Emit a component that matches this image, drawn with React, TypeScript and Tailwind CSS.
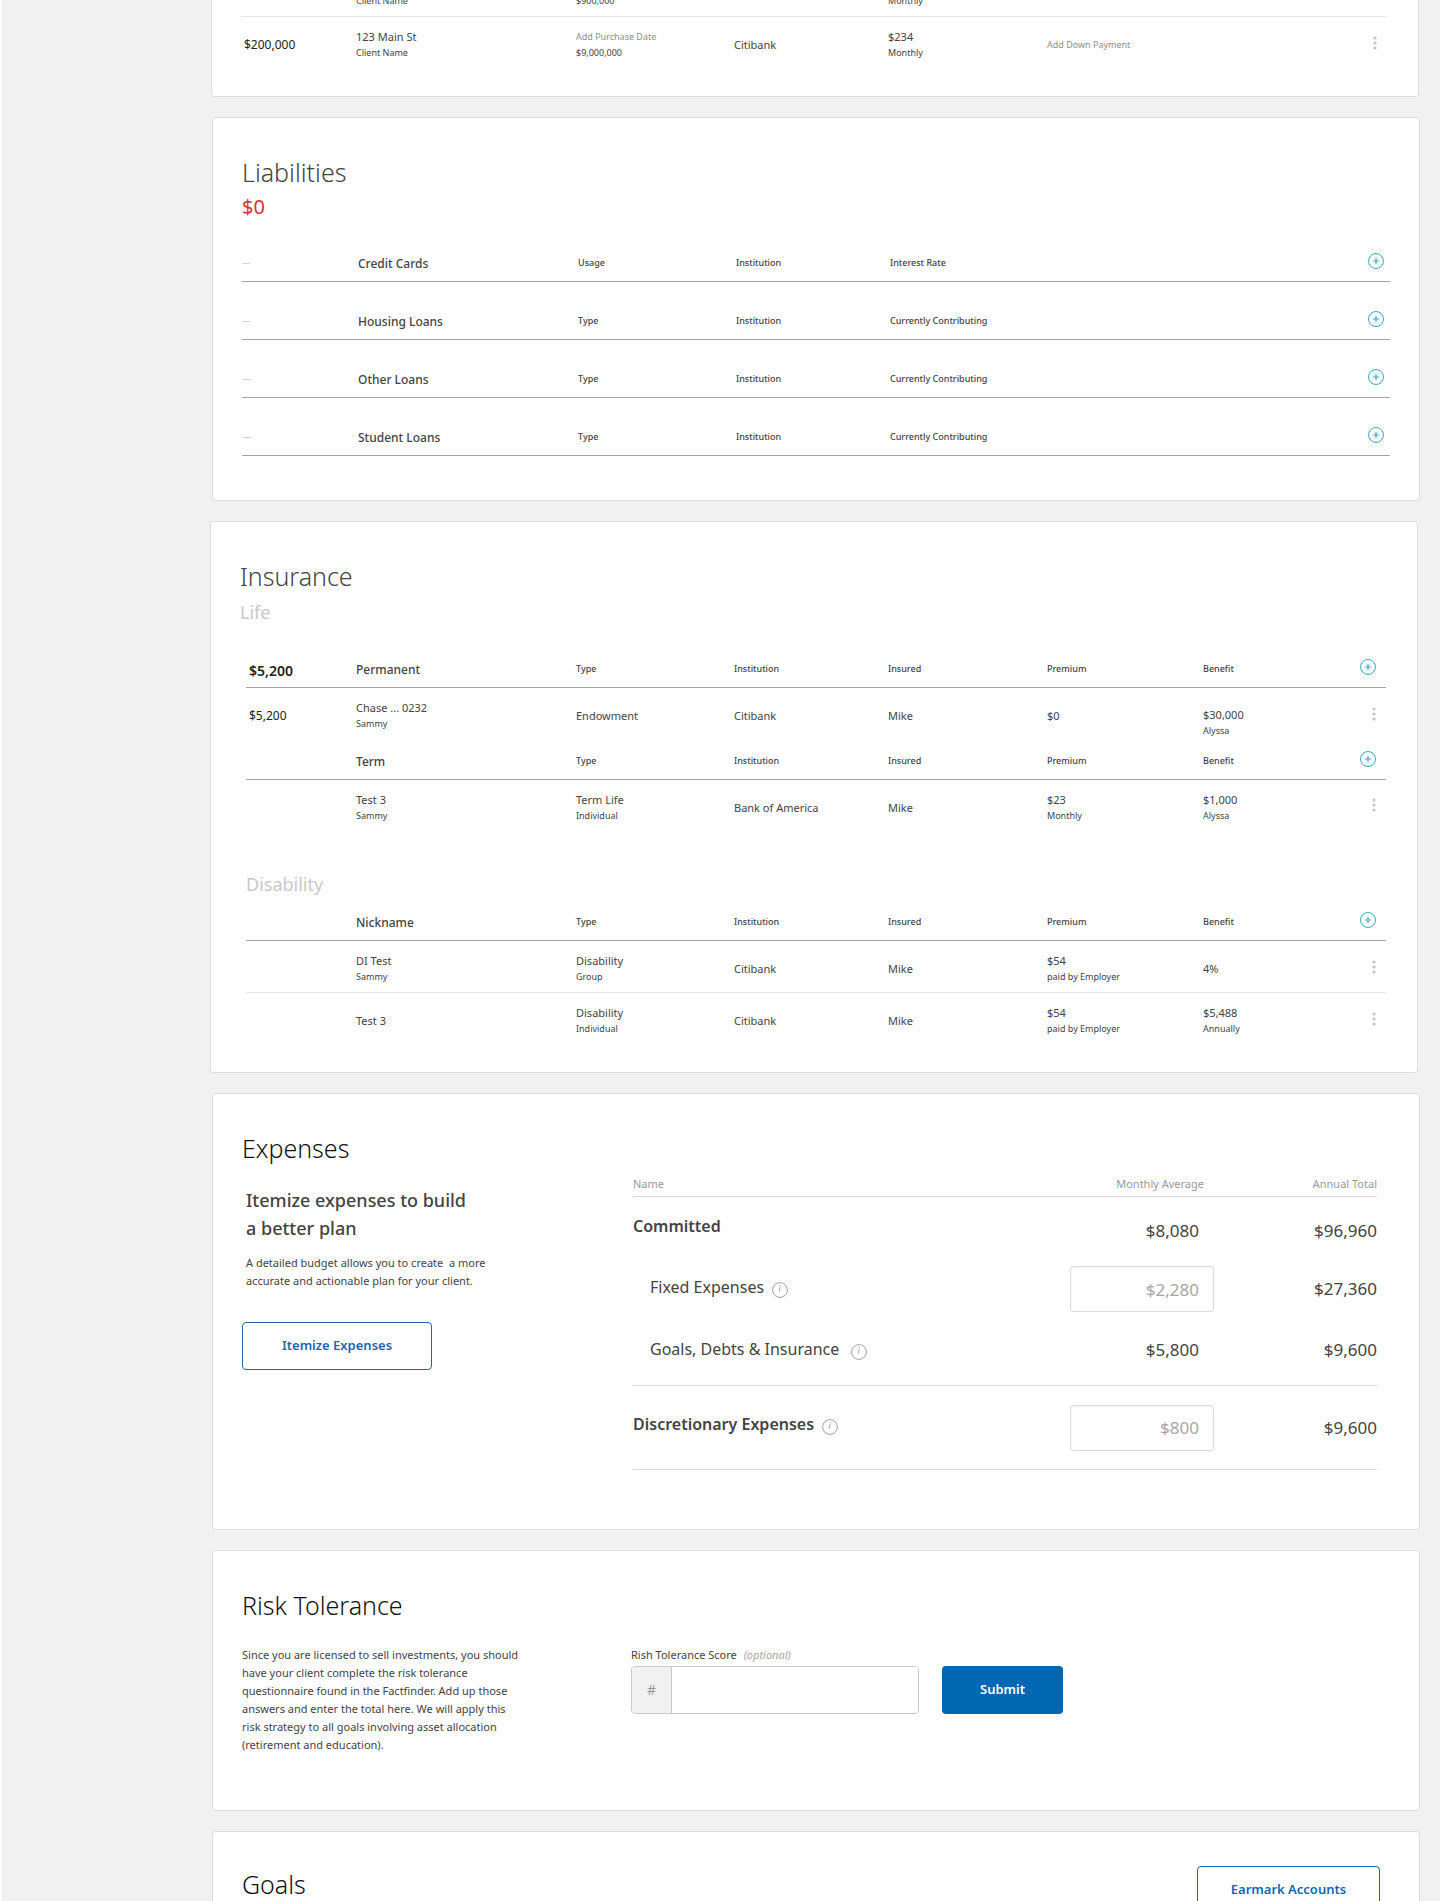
import React, { FC, ReactNode } from "react";

interface CardProps {
  children: ReactNode;
  className?: string;
}

const Card: FC<CardProps> = ({ children, className = "" }) => (
  <section
    className={`rounded-[3px] border border-[#dedede] bg-[#fefefe] px-[29px] ${className}`}
  >
    {children}
  </section>
);

const Title: FC<{ children: ReactNode; dark?: boolean }> = ({ children, dark }) => (
  <h2
    className={`text-[25px] leading-9 font-light ${dark ? "text-[#111]" : "text-[#444]"}`}
  >
    {children}
  </h2>
);

const PlusButton: FC<{ label: string }> = ({ label }) => (
  <button type="button" aria-label={label} className="block h-4 w-4 cursor-pointer">
    <svg viewBox="0 0 16 16" fill="none" stroke="#3ba7d3" className="h-4 w-4">
      <circle cx="8" cy="8" r="7.5" strokeWidth="1" />
      <path d="M8 5v6M5 8h6" strokeWidth="1.2" />
    </svg>
  </button>
);

const DotsButton: FC<{ label: string }> = ({ label }) => (
  <button type="button" aria-label={label} className="block h-4 w-4 cursor-pointer">
    <svg viewBox="0 0 16 16" fill="#c4c4c4" className="h-4 w-4">
      <circle cx="8" cy="3" r="1.6" />
      <circle cx="8" cy="8" r="1.6" />
      <circle cx="8" cy="13" r="1.6" />
    </svg>
  </button>
);

const InfoButton: FC<{ label: string }> = ({ label }) => (
  <button type="button" aria-label={label} className="mt-[6px] block h-4 w-4 cursor-pointer">
    <svg viewBox="0 0 16 16" fill="none" stroke="#8c8c8c" className="h-4 w-4">
      <circle cx="8" cy="8" r="7.4" strokeWidth="0.8" />
      <path d="M8.1 5.2L7.2 9.6M8.6 3.2L8.4 4.2" strokeWidth="0.8" />
    </svg>
  </button>
);

interface Cell {
  top?: string;
  sub?: string;
  muted?: boolean;
  low?: boolean;
}

interface Row {
  amount?: string;
  cells: (Cell | null)[];
}

const Columns: FC<{ first: string }> = ({ first }) => (
  <colgroup>
    <col className={first} />
    <col className="w-[220px]" />
    <col className="w-[158px]" />
    <col className="w-[154px]" />
    <col className="w-[159px]" />
    <col className="w-[156px]" />
    <col />
  </colgroup>
);

interface HeadProps {
  amount?: ReactNode;
  name: string;
  columns: (string | null)[];
  tall?: boolean;
  inset?: boolean;
}

const HeadRow: FC<HeadProps> = ({ amount, name, columns, tall, inset }) => (
  <tr className={`border-b border-[#a3a3a3] align-bottom ${tall ? "h-[58px]" : "h-10"}`}>
    <td
      className={`text-sm leading-4 font-semibold text-[#222] ${
        inset ? "pb-2 pl-[3px]" : "pb-[10px]"
      }`}
    >
      {amount}
    </td>
    <th scope="col" className="pb-[9px] text-left text-xs leading-4 font-medium">
      {name}
    </th>
    {columns.map((column, i) =>
      column ? (
        <th
          key={i}
          scope="col"
          className="pb-[10px] text-left text-[9px] leading-4 font-medium"
        >
          {column}
        </th>
      ) : (
        <td key={i} />
      )
    )}
    <td className={`pb-3 ${inset ? "pr-[10px]" : "pr-[6px]"}`}>
      <div className="flex justify-end">
        <PlusButton label={`Add to ${name}`} />
      </div>
    </td>
  </tr>
);

const DataRow: FC<Row & { last?: boolean }> = ({ amount, cells, last }) => (
  <tr className={`h-[51px] ${last ? "" : "border-b border-[#e6e6e6]"}`}>
    <td className="pt-3 pb-[7px] pl-[3px] text-xs leading-4 text-[#222]">{amount}</td>
    {cells.map((cell, i) => (
      <td key={i} className={cell?.low ? "pt-[19px]" : "pt-3 pb-[7px]"}>
        {cell && (
          <>
            <div
              className={
                cell.muted
                  ? "h-4 text-[9px] leading-4 text-[#8e8e8e]"
                  : "h-4 text-[11px] leading-4"
              }
            >
              {cell.top}
            </div>
            {cell.sub && <div className="text-[9px] leading-4">{cell.sub}</div>}
          </>
        )}
      </td>
    ))}
    <td className="pt-[7px] pr-[4px] pb-[7px]">
      <div className="flex justify-end">
        <DotsButton label="More options" />
      </div>
    </td>
  </tr>
);

const properties: Row[] = [
  {
    cells: [
      { sub: "Client Name" },
      { sub: "$900,000" },
      null,
      { sub: "Monthly" },
      null,
      null,
    ],
  },
  {
    amount: "$200,000",
    cells: [
      { top: "123 Main St", sub: "Client Name" },
      { top: "Add Purchase Date", sub: "$9,000,000", muted: true },
      { top: "Citibank" },
      { top: "$234", sub: "Monthly" },
      { top: "Add Down Payment", muted: true },
      null,
    ],
  },
];

const liabilities = [
  { name: "Credit Cards", columns: ["Usage", "Institution", "Interest Rate", null, null] },
  { name: "Housing Loans", columns: ["Type", "Institution", "Currently Contributing", null, null] },
  { name: "Other Loans", columns: ["Type", "Institution", "Currently Contributing", null, null] },
  { name: "Student Loans", columns: ["Type", "Institution", "Currently Contributing", null, null] },
];

const insuranceColumns = ["Type", "Institution", "Insured", "Premium", "Benefit"];

const permanent: Row = {
  amount: "$5,200",
  cells: [
    { top: "Chase ... 0232", sub: "Sammy" },
    { top: "Endowment" },
    { top: "Citibank" },
    { top: "Mike" },
    { top: "$0" },
    { top: "$30,000", sub: "Alyssa", low: true },
  ],
};

const term: Row = {
  cells: [
    { top: "Test 3", sub: "Sammy" },
    { top: "Term Life", sub: "Individual" },
    { top: "Bank of America" },
    { top: "Mike" },
    { top: "$23", sub: "Monthly" },
    { top: "$1,000", sub: "Alyssa" },
  ],
};

const disability: Row[] = [
  {
    cells: [
      { top: "DI Test", sub: "Sammy" },
      { top: "Disability", sub: "Group" },
      { top: "Citibank" },
      { top: "Mike" },
      { top: "$54", sub: "paid by Employer" },
      { top: "4%" },
    ],
  },
  {
    cells: [
      { top: "Test 3" },
      { top: "Disability", sub: "Individual" },
      { top: "Citibank" },
      { top: "Mike" },
      { top: "$54", sub: "paid by Employer" },
      { top: "$5,488", sub: "Annually" },
    ],
  },
];

const Properties = () => (
  <Card className="-mt-9 mr-[1px] ml-[1px] pb-7">
    <div className="pr-[2px]">
      <table className="w-full table-fixed">
        <Columns first="w-[115px]" />
        <tbody>
          {properties.map((row, i) => (
            <DataRow key={i} {...row} last={i === properties.length - 1} />
          ))}
        </tbody>
      </table>
    </div>
  </Card>
);

const Liabilities = () => (
  <Card className="ml-[2px] pt-9 pb-11">
    <Title>Liabilities</Title>
    <p className="text-xl leading-[33px] text-[#d63333]">$0</p>
    <table className="w-full table-fixed">
      <Columns first="w-[116px]" />
      <thead>
        {liabilities.map((item) => (
          <HeadRow
            key={item.name}
            tall
            amount={<span className="text-[9px] font-normal text-[#bbb]">—</span>}
            {...item}
          />
        ))}
      </thead>
    </table>
  </Card>
);

const Insurance = () => (
  <Card className="mr-[2px] pt-9 pb-7">
    <Title>Insurance</Title>
    <h3 className="text-lg leading-9 text-[#c9c9c9]">Life</h3>
    <div className="pr-[2px] pl-[6px]">
      <table className="mt-[18px] w-full table-fixed">
        <Columns first="w-[110px]" />
        <tbody>
          <HeadRow amount="$5,200" name="Permanent" columns={insuranceColumns} inset />
          <DataRow {...permanent} last />
          <HeadRow name="Term" columns={insuranceColumns} inset />
          <DataRow {...term} last />
        </tbody>
      </table>
      <h3 className="mt-9 text-lg leading-[34px] text-[#c9c9c9]">Disability</h3>
      <table className="w-full table-fixed">
        <Columns first="w-[110px]" />
        <tbody>
          <HeadRow name="Nickname" columns={insuranceColumns} inset />
          {disability.map((row, i) => (
            <DataRow key={i} {...row} last={i === disability.length - 1} />
          ))}
        </tbody>
      </table>
    </div>
  </Card>
);

const moneyInput =
  "ml-auto block h-[46px] w-[144px] rounded-[3px] border border-[#dcdcdc] bg-white pr-[14px] text-right text-[17px] text-[#555] shadow-[inset_0_1px_3px_rgba(0,0,0,0.06)] placeholder:text-[#a6a6a6]";

const Expenses = () => (
  <Card className="ml-[2px] pt-9 pb-[59px]">
    <Title dark>Expenses</Title>
    <div className="flex">
      <div className="w-[391px] shrink-0 pt-5">
        <div className="pl-1">
          <h3 className="text-lg leading-7 font-medium">
            Itemize expenses to build
            <br />a better plan
          </h3>
          <p className="mt-3 text-[11px] leading-[18px]">
            A detailed budget allows you to create&nbsp; a more
            <br />
            accurate and actionable plan for your client.
          </p>
        </div>
        <button
          type="button"
          className="mt-8 h-12 w-[190px] cursor-pointer rounded-[4px] border border-[#1f66b1] bg-white text-[13px] font-semibold text-[#1f66b1]"
        >
          Itemize Expenses
        </button>
      </div>

      <table className="mr-[13px] w-full table-fixed text-base">
        <colgroup>
          <col />
          <col className="w-[164px]" />
          <col className="w-[163px]" />
        </colgroup>
        <thead>
          <tr className="border-b border-[#dcdcdc] align-bottom text-[11px] leading-4 text-[#9a9a9a]">
            <th scope="col" className="pt-[10px] pb-1 text-left font-normal">Name</th>
            <th scope="col" className="pr-[10px] pb-1 text-right font-normal">Monthly Average</th>
            <th scope="col" className="pb-1 text-right font-normal">Annual Total</th>
          </tr>
        </thead>
        <tbody>
          <tr className="h-[62px]">
            <th scope="row" className="pb-[3px] text-left font-semibold">Committed</th>
            <td className="pt-[6px] pr-[15px] text-right text-[17px]">$8,080</td>
            <td className="pt-[6px] text-right text-[17px]">$96,960</td>
          </tr>
          <tr className="h-[61px]">
            <th scope="row" className="pb-1 pl-[17px] text-left font-normal">
              <div className="flex items-center gap-2">
                <label htmlFor="fixed">Fixed Expenses</label>
                <InfoButton label="About fixed expenses" />
              </div>
            </th>
            <td>
              <input id="fixed" placeholder="$2,280" className={moneyInput} />
            </td>
            <td className="text-right text-[17px]">$27,360</td>
          </tr>
          <tr className="h-[66px] border-b border-[#dcdcdc]">
            <th scope="row" className="pb-[6px] pl-[17px] text-left font-normal">
              <div className="flex items-center gap-3">
                Goals, Debts &amp; Insurance
                <InfoButton label="About goals, debts and insurance" />
              </div>
            </th>
            <td className="pr-[15px] pb-[6px] text-right text-[17px]">$5,800</td>
            <td className="pb-[6px] text-right text-[17px]">$9,600</td>
          </tr>
          <tr className="h-[84px] border-b border-[#dcdcdc]">
            <th scope="row" className="pb-2 text-left font-semibold">
              <div className="flex items-center gap-2">
                <label htmlFor="discretionary">Discretionary Expenses</label>
                <InfoButton label="About discretionary expenses" />
              </div>
            </th>
            <td>
              <input id="discretionary" placeholder="$800" className={moneyInput} />
            </td>
            <td className="text-right text-[17px]">$9,600</td>
          </tr>
        </tbody>
      </table>
    </div>
  </Card>
);

const RiskTolerance = () => (
  <Card className="ml-[2px] pt-9 pb-14">
    <Title dark>Risk Tolerance</Title>
    <div className="mt-[23px] flex">
      <p className="w-[389px] shrink-0 text-[11px] leading-[18px]">
        Since you are licensed to sell investments, you should
        <br />
        have your client complete the risk tolerance
        <br />
        questionnaire found in the Factfinder. Add up those
        <br />
        answers and enter the total here. We will apply this
        <br />
        risk strategy to all goals involving asset allocation
        <br />
        (retirement and education).
      </p>
      <form>
        <label htmlFor="score" className="block text-[11px] leading-[18px]">
          Rish Tolerance Score <i className="ml-1 text-[#a6a6a6]">(optional)</i>
        </label>
        <div className="mt-[2px] flex gap-[23px]">
          <div className="flex h-12 w-[288px] overflow-hidden rounded-[4px] border border-[#c9c9c9]">
            <span className="flex w-10 items-center justify-center border-r border-[#c9c9c9] bg-[#f1f1f1] text-sm text-[#999]">
              #
            </span>
            <input id="score" className="min-w-0 grow bg-white px-3 text-sm" />
          </div>
          <button
            type="button"
            className="h-12 w-[121px] cursor-pointer rounded-[4px] bg-[#0067b3] text-[13px] font-semibold text-white"
          >
            Submit
          </button>
        </div>
      </form>
    </div>
  </Card>
);

const Goals = () => (
  <Card className="ml-[2px] flex justify-between pt-[34px] pb-6">
    <Title dark>Goals</Title>
    <button
      type="button"
      className="mr-[10px] h-12 w-[183px] cursor-pointer rounded-[4px] border border-[#0a69b0] bg-white text-[13px] font-semibold text-[#0a69b0]"
    >
      Earmark Accounts
    </button>
  </Card>
);

export default function App() {
  return (
    <div className="h-screen overflow-hidden border-l-2 border-white bg-[#f1f1f1] font-['Noto_Sans','Open_Sans',sans-serif] text-[#444]">
      <main className="flex flex-col gap-5 pr-5 pl-[208px]">
        <Properties />
        <Liabilities />
        <Insurance />
        <Expenses />
        <RiskTolerance />
        <Goals />
      </main>
    </div>
  );
}
